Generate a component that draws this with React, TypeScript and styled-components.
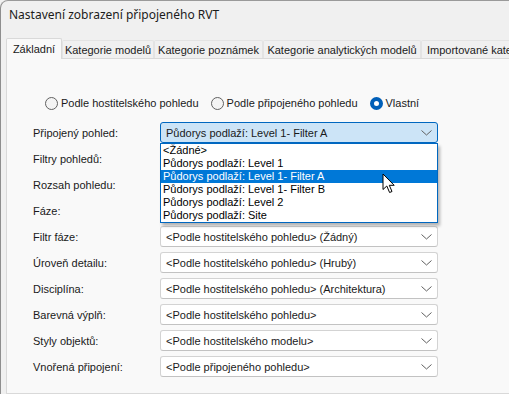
import styled, { createGlobalStyle } from 'styled-components';

const FONT = '"Liberation Sans", Arial, sans-serif';

const GlobalStyle = createGlobalStyle`
    body {
        margin: 0;
        background: #f0f0f0;
        font-family: ${FONT};
        color: #1a1a1a;
    }
`;

const Window = styled.div`
    box-sizing: border-box;
    width: 509px;
    height: 394px;
    overflow: hidden;
    display: flex;
    flex-direction: column;
    background: #f0f0f0;
    border-left: 1px solid #8e8e8e;
    border-top: 1px solid #9a9a9a;
    border-top-left-radius: 8px;
`;

const TitleBar = styled.div`
    height: 27px;
    padding-left: 8px;
    display: flex;
    align-items: center;
    font-family: "Noto Sans", sans-serif;
    font-size: 12px;
    color: #1b1b1b;
`;

const TabStrip = styled.div`
    display: flex;
    align-items: flex-end;
    height: 20px;
    margin-top: 10px;
    padding-left: 5px;
`;

const Tab = styled.div<{ $active?: boolean; $width: number; $left?: boolean }>`
    box-sizing: border-box;
    flex-shrink: 0;
    width: ${p => p.$width}px;
    height: ${p => (p.$active ? 21 : 18)}px;
    margin-bottom: ${p => (p.$active ? -1 : 0)}px;
    position: relative;
    z-index: ${p => (p.$active ? 1 : 0)};
    display: flex;
    align-items: center;
    justify-content: ${p => (p.$left ? 'flex-start' : 'center')};
    padding-left: ${p => (p.$left ? 5 : 0)}px;
    white-space: nowrap;
    font-size: 11px;
    background: ${p => (p.$active ? '#f9f9f9' : '#f0f0f0')};
    border: 1px solid ${p => (p.$active ? '#d9d9d9' : '#e3e3e3')};
    border-bottom: none;
    border-radius: 2px 2px 0 0;
`;

const Panel = styled.div`
    flex: 1;
    margin-left: 5px;
    background: #f9f9f9;
    border: 1px solid #d9d9d9;
    border-right: none;
    padding: 37px 0 0 26px;
`;

const RadioRow = styled.div`
    display: flex;
    align-items: center;
    gap: 12px;
    height: 14px;
    padding-left: 12px;
    font-size: 11px;
`;

const RadioOption = styled.label`
    display: flex;
    align-items: center;
    gap: 3px;
    white-space: nowrap;
`;

const RadioDot = styled.span<{ $checked?: boolean }>`
    box-sizing: border-box;
    width: 13px;
    height: 13px;
    border-radius: 50%;
    background: ${p => (p.$checked ? '#ffffff' : '#f4f4f4')};
    border: ${p => (p.$checked ? '4px solid #005fb8' : '1px solid #616161')};
`;

const Form = styled.div`
    display: grid;
    grid-template-columns: 127px 278px;
    grid-auto-rows: 21px;
    row-gap: 5px;
    margin-top: 12px;
    font-size: 11px;
`;

const Label = styled.div`
    display: flex;
    align-items: center;
    white-space: nowrap;
`;

const ComboWrap = styled.div`
    position: relative;
`;

const Combo = styled.div<{ $open?: boolean }>`
    box-sizing: border-box;
    height: 21px;
    display: flex;
    align-items: center;
    justify-content: space-between;
    padding: 0 5px 0 5px;
    white-space: nowrap;
    border: 1px solid ${p => (p.$open ? '#0067c0' : '#d3d3d3')};
    border-bottom-color: ${p => (p.$open ? '#0067c0' : '#c2c2c2')};
    border-radius: 3px;
    background: ${p => (p.$open ? '#cce4f7' : '#ffffff')};
`;

const Chevron = () => (
    <svg width="11" height="6" viewBox="0 0 11 6">
        <polyline points="0.5,0.5 5.5,5 10.5,0.5" fill="none" stroke="#606060" strokeWidth="1" />
    </svg>
);

const DropList = styled.div`
    position: absolute;
    top: 21px;
    left: 0;
    width: 278px;
    box-sizing: border-box;
    border: 1px solid #0067c0;
    background: #ffffff;
    box-shadow: 2px 3px 3px rgba(0, 0, 0, 0.28);
    z-index: 5;
`;

const DropItem = styled.div<{ $selected?: boolean }>`
    height: 13px;
    line-height: 13px;
    padding-left: 2px;
    font-size: 11px;
    white-space: nowrap;
    background: ${p => (p.$selected ? '#0078d7' : 'transparent')};
    color: ${p => (p.$selected ? '#ffffff' : '#000000')};
`;

const Cursor = styled.svg`
    position: absolute;
    left: 221px;
    top: 29px;
`;

const options = [
    '<Žádné>',
    'Půdorys podlaží: Level 1',
    'Půdorys podlaží: Level 1- Filter A',
    'Půdorys podlaží: Level 1- Filter B',
    'Půdorys podlaží: Level 2',
    'Půdorys podlaží: Site',
];

const rows: [string, string | null][] = [
    ['Filtry pohledů:', null],
    ['Rozsah pohledu:', null],
    ['Fáze:', null],
    ['Filtr fáze:', '<Podle hostitelského pohledu> (Žádný)'],
    ['Úroveň detailu:', '<Podle hostitelského pohledu> (Hrubý)'],
    ['Disciplína:', '<Podle hostitelského pohledu> (Architektura)'],
    ['Barevná výplň:', '<Podle hostitelského pohledu>'],
    ['Styly objektů:', '<Podle hostitelského modelu>'],
    ['Vnořená připojení:', '<Podle připojeného pohledu>'],
];

export default function App() {
    return (
        <>
            <GlobalStyle />
            <Window>
                <TitleBar>Nastavení zobrazení připojeného RVT</TitleBar>
                <TabStrip>
                    <Tab $active $width={56}>Základní</Tab>
                    <Tab $width={92}>Kategorie modelů</Tab>
                    <Tab $width={109}>Kategorie poznámek</Tab>
                    <Tab $width={158}>Kategorie analytických modelů</Tab>
                    <Tab $width={120} $left>Importované kategorie</Tab>
                </TabStrip>
                <Panel>
                    <RadioRow>
                        <RadioOption><RadioDot />Podle hostitelského pohledu</RadioOption>
                        <RadioOption><RadioDot />Podle připojeného pohledu</RadioOption>
                        <RadioOption><RadioDot $checked />Vlastní</RadioOption>
                    </RadioRow>
                    <Form>
                        <Label>Připojený pohled:</Label>
                        <ComboWrap>
                            <Combo $open>
                                <span>Půdorys podlaží: Level 1- Filter A</span>
                                <Chevron />
                            </Combo>
                            <DropList>
                                {options.map((o, i) => (
                                    <DropItem key={o} $selected={i === 2}>{o}</DropItem>
                                ))}
                                <Cursor width="14" height="21" viewBox="0 0 14 21">
                                    <path
                                        d="M1 1 L1 16.5 L4.8 13 L7.6 19.5 L10 18.5 L7.3 12.3 L12.2 12.3 Z"
                                        fill="#ffffff"
                                        stroke="#000000"
                                        strokeWidth="1"
                                        strokeLinejoin="round"
                                    />
                                </Cursor>
                            </DropList>
                        </ComboWrap>
                        {rows.map(([label, value]) => [
                            <Label key={label}>{label}</Label>,
                            <ComboWrap key={label + '-c'}>
                                {value && (
                                    <Combo>
                                        <span>{value}</span>
                                        <Chevron />
                                    </Combo>
                                )}
                            </ComboWrap>,
                        ])}
                    </Form>
                </Panel>
            </Window>
        </>
    );
}
